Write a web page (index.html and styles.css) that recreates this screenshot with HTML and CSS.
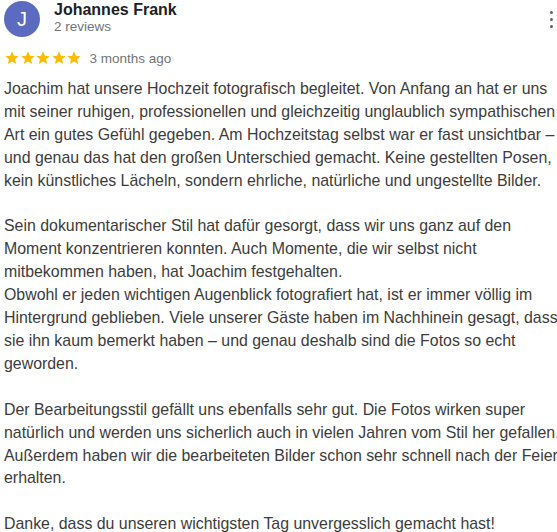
FILE: index.html
```html
<!DOCTYPE html>
<html lang="de">
<head>
<meta charset="utf-8">
<link rel="stylesheet" href="styles.css">
</head>
<body>
<div class="review">
  <div class="header">
    <div class="avatar">J</div>
    <div class="who">
      <div class="name">Johannes Frank</div>
      <div class="count">2 reviews</div>
    </div>
    <div class="more"><span></span><span></span><span></span></div>
  </div>
  <div class="meta">
    <div class="stars">
      <svg viewBox="0 0 24 24"><path d="M12 17.27L18.18 21l-1.64-7.03L22 9.24l-7.19-.61L12 2 9.19 8.63 2 9.24l5.46 4.73L5.82 21z"/></svg>
      <svg viewBox="0 0 24 24"><path d="M12 17.27L18.18 21l-1.64-7.03L22 9.24l-7.19-.61L12 2 9.19 8.63 2 9.24l5.46 4.73L5.82 21z"/></svg>
      <svg viewBox="0 0 24 24"><path d="M12 17.27L18.18 21l-1.64-7.03L22 9.24l-7.19-.61L12 2 9.19 8.63 2 9.24l5.46 4.73L5.82 21z"/></svg>
      <svg viewBox="0 0 24 24"><path d="M12 17.27L18.18 21l-1.64-7.03L22 9.24l-7.19-.61L12 2 9.19 8.63 2 9.24l5.46 4.73L5.82 21z"/></svg>
      <svg viewBox="0 0 24 24"><path d="M12 17.27L18.18 21l-1.64-7.03L22 9.24l-7.19-.61L12 2 9.19 8.63 2 9.24l5.46 4.73L5.82 21z"/></svg>
    </div>
    <span class="date">3 months ago</span>
  </div>
  <div class="text">Joachim hat unsere Hochzeit fotografisch begleitet. Von Anfang an hat er uns mit seiner ruhigen, professionellen und gleichzeitig unglaublich sympathischen Art ein gutes Gefühl gegeben. Am Hochzeitstag selbst war er fast unsichtbar – und genau das hat den großen Unterschied gemacht. Keine gestellten Posen, kein künstliches Lächeln, sondern ehrliche, natürliche und ungestellte Bilder.<br><br>Sein dokumentarischer Stil hat dafür gesorgt, dass wir uns ganz auf den Moment konzentrieren konnten. Auch Momente, die wir selbst nicht mitbekommen haben, hat Joachim festgehalten.<br>Obwohl er jeden wichtigen Augenblick fotografiert hat, ist er immer völlig im Hintergrund geblieben. Viele unserer Gäste haben im Nachhinein gesagt, dass sie ihn kaum bemerkt haben – und genau deshalb sind die Fotos so echt geworden.<br><br>Der Bearbeitungsstil gefällt uns ebenfalls sehr gut. Die Fotos wirken super natürlich und werden uns sicherlich auch in vielen Jahren vom Stil her gefallen. Außerdem haben wir die bearbeiteten Bilder schon sehr schnell nach der Feier erhalten.<br><br>Danke, dass du unseren wichtigsten Tag unvergesslich gemacht hast!</div>
</div>
</body>
</html>
```

FILE: styles.css
```css
html, body {
  margin: 0;
  padding: 0;
  background: #fff;
  overflow: hidden;
}
body {
  font-family: "Liberation Sans", Arial, sans-serif;
  color: #3c3c3c;
}
.review {
  width: 560px;
  padding: 0 0 0 4px;
}
.header {
  display: flex;
  align-items: flex-start;
  padding-top: 1px;
  width: 549px;
}
.avatar {
  width: 36px;
  height: 36px;
  border-radius: 50%;
  background: #5c6bc0;
  color: #fff;
  font-size: 20px;
  line-height: 36px;
  text-align: center;
  flex: none;
}
.who {
  margin-left: 14px;
  flex: 1;
}
.name {
  font-weight: bold;
  font-size: 16px;
  line-height: 18px;
  color: #202124;
}
.count {
  font-size: 13.5px;
  line-height: 16px;
  color: #70757a;
}
.more {
  display: flex;
  flex-direction: column;
  gap: 4px;
  padding-top: 10px;
}
.more span {
  width: 3px;
  height: 3px;
  border-radius: 50%;
  background: #5f6368;
}
.meta {
  display: flex;
  align-items: center;
  margin-top: 13px;
  height: 16px;
}
.stars {
  display: flex;
}
.stars svg {
  width: 16px;
  height: 16px;
  fill: #fbbc04;
  margin-right: -0.5px;
}
.date {
  margin-left: 8px;
  font-size: 13.5px;
  color: #70757a;
}
.text {
  margin-top: 12px;
  font-size: 15.9px;
  line-height: 22.9px;
}
```
